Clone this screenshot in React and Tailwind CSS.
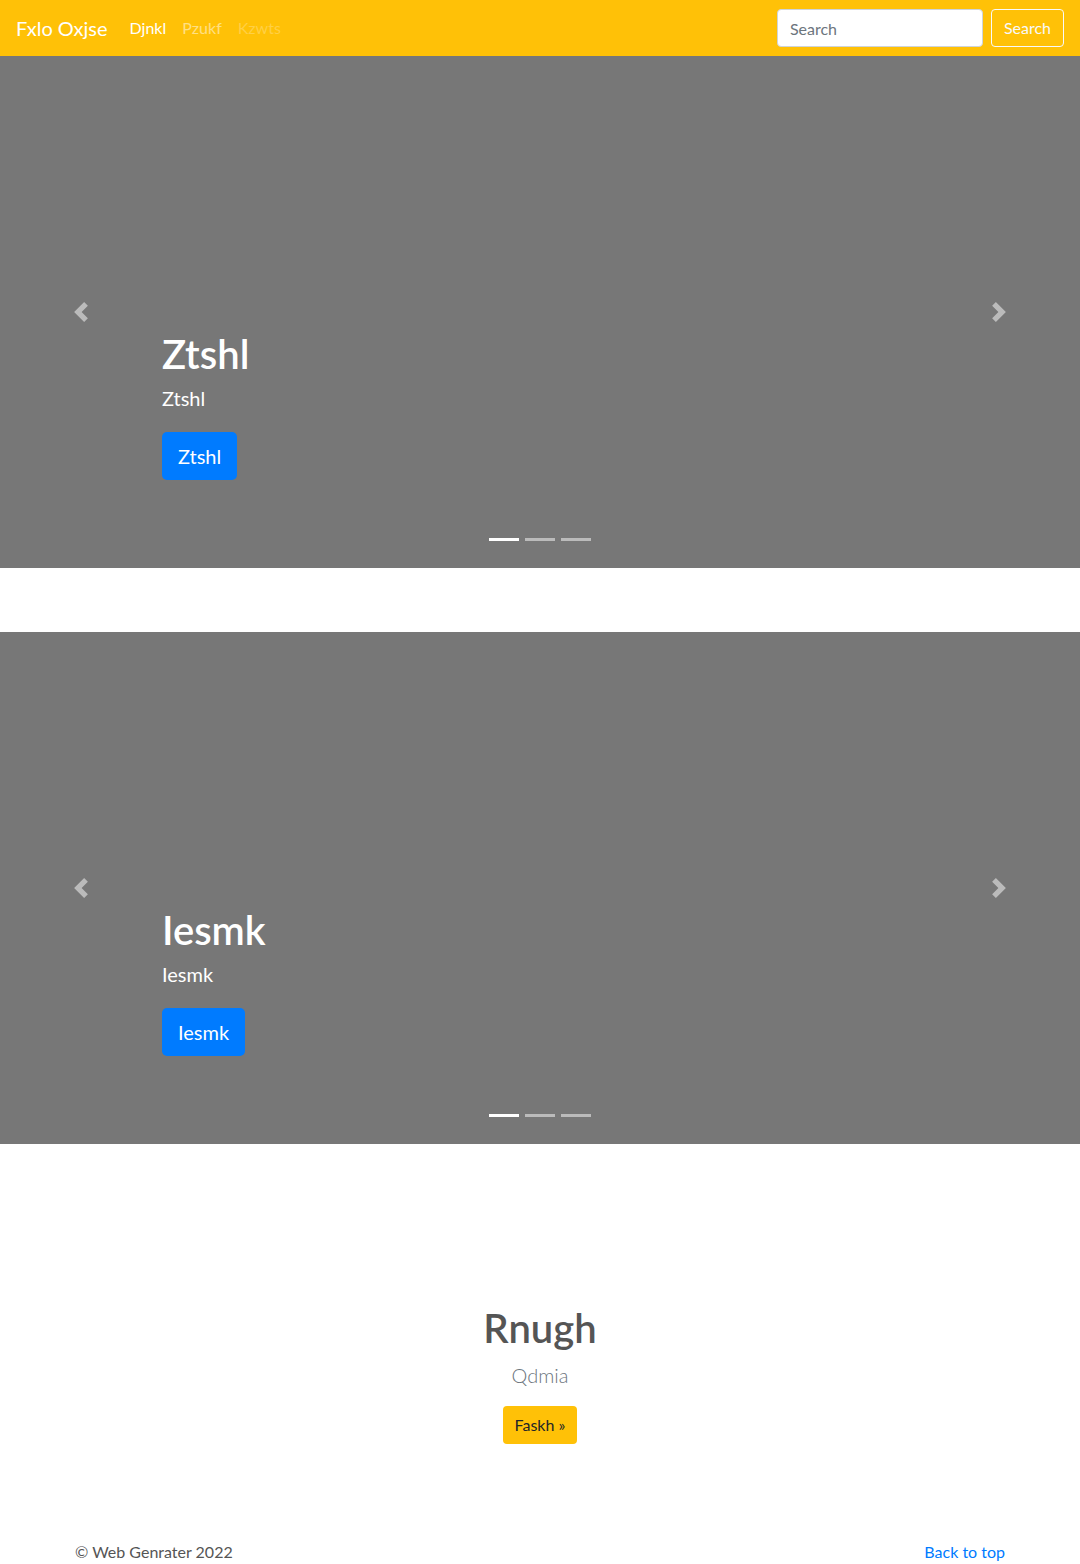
import React from 'react';

const font = { fontFamily: 'Lato, "Open Sans", Arial, sans-serif' };

function Prev() {
  return (
    <svg width="20" height="20" viewBox="0 0 8 8" fill="#fff">
      <path d="M5.25 0l-4 4 4 4 1.5-1.5L4.25 4l2.5-2.5L5.25 0z" />
    </svg>
  );
}

function Next() {
  return (
    <svg width="20" height="20" viewBox="0 0 8 8" fill="#fff">
      <path d="M2.75 0l-1.5 1.5L3.75 4l-2.5 2.5L2.75 8l4-4-4-4z" />
    </svg>
  );
}

function Slide({ title }) {
  return (
    <div className="relative h-[512px] bg-[#777777] flex">
      <div className="w-[162px] flex items-center justify-center opacity-50">
        <Prev />
      </div>
      <div className="flex-1 flex flex-col justify-end pb-[88px] text-white">
        <h1 className="text-[40px] leading-[48px] font-semibold mb-[5px]">{title}</h1>
        <p className="text-[20px] leading-[30px] mb-[19px]">{title}</p>
        <div>
          <a className="inline-block bg-[#007bff] text-white text-[20px] leading-[30px] px-4 py-[9px] rounded-[5px]">{title}</a>
        </div>
      </div>
      <div className="w-[162px] flex items-center justify-center opacity-50">
        <Next />
      </div>
      <div className="absolute left-0 right-0 bottom-[27px] flex justify-center gap-[6px]">
        <span className="w-[30px] h-[3px] bg-white" />
        <span className="w-[30px] h-[3px] bg-white/50" />
        <span className="w-[30px] h-[3px] bg-white/50" />
      </div>
    </div>
  );
}

export default function App() {
  return (
    <div style={font} className="bg-white text-[#212529]">
      <nav className="h-[56px] bg-[#ffc107] flex items-center px-4">
        <span className="text-white text-[20px] mr-[14px]">Fxlo Oxjse</span>
        <div className="flex text-[16px]">
          <a className="px-2 text-white">Djnkl</a>
          <a className="px-2 text-white/50">Pzukf</a>
          <a className="px-2 text-white/25">Kzwts</a>
        </div>
        <div className="ml-auto flex items-center gap-2">
          <input
            placeholder="Search"
            className="w-[206px] h-[38px] bg-white border border-[#ced4da] rounded-[4px] px-3 text-[16px] placeholder:text-[#6c757d] outline-none"
          />
          <button className="h-[38px] px-3 border border-[#f8f9fa] rounded-[4px] text-[#f8f9fa] text-[16px]">Search</button>
        </div>
      </nav>

      <Slide title="Ztshl" />
      <div className="h-[64px]" />
      <Slide title="Iesmk" />

      <section className="pt-[160px] text-center">
        <h1 className="text-[40px] leading-[48px] font-semibold text-[#555555] mb-2">Rnugh</h1>
        <p className="text-[20px] leading-[30px] font-light text-[#6c757d] mb-4">Qdmia</p>
        <a className="inline-block bg-[#ffc107] text-[#212529] text-[16px] leading-[24px] px-3 py-[7px] rounded-[4px]">Faskh »</a>
      </section>

      <footer className="max-w-[960px] mx-auto px-[15px] pt-[96px] flex justify-between text-[16px] leading-[24px]">
        <p className="text-[#555555]">© Web Genrater 2022</p>
        <a className="text-[#007bff]">Back to top</a>
      </footer>
    </div>
  );
}
